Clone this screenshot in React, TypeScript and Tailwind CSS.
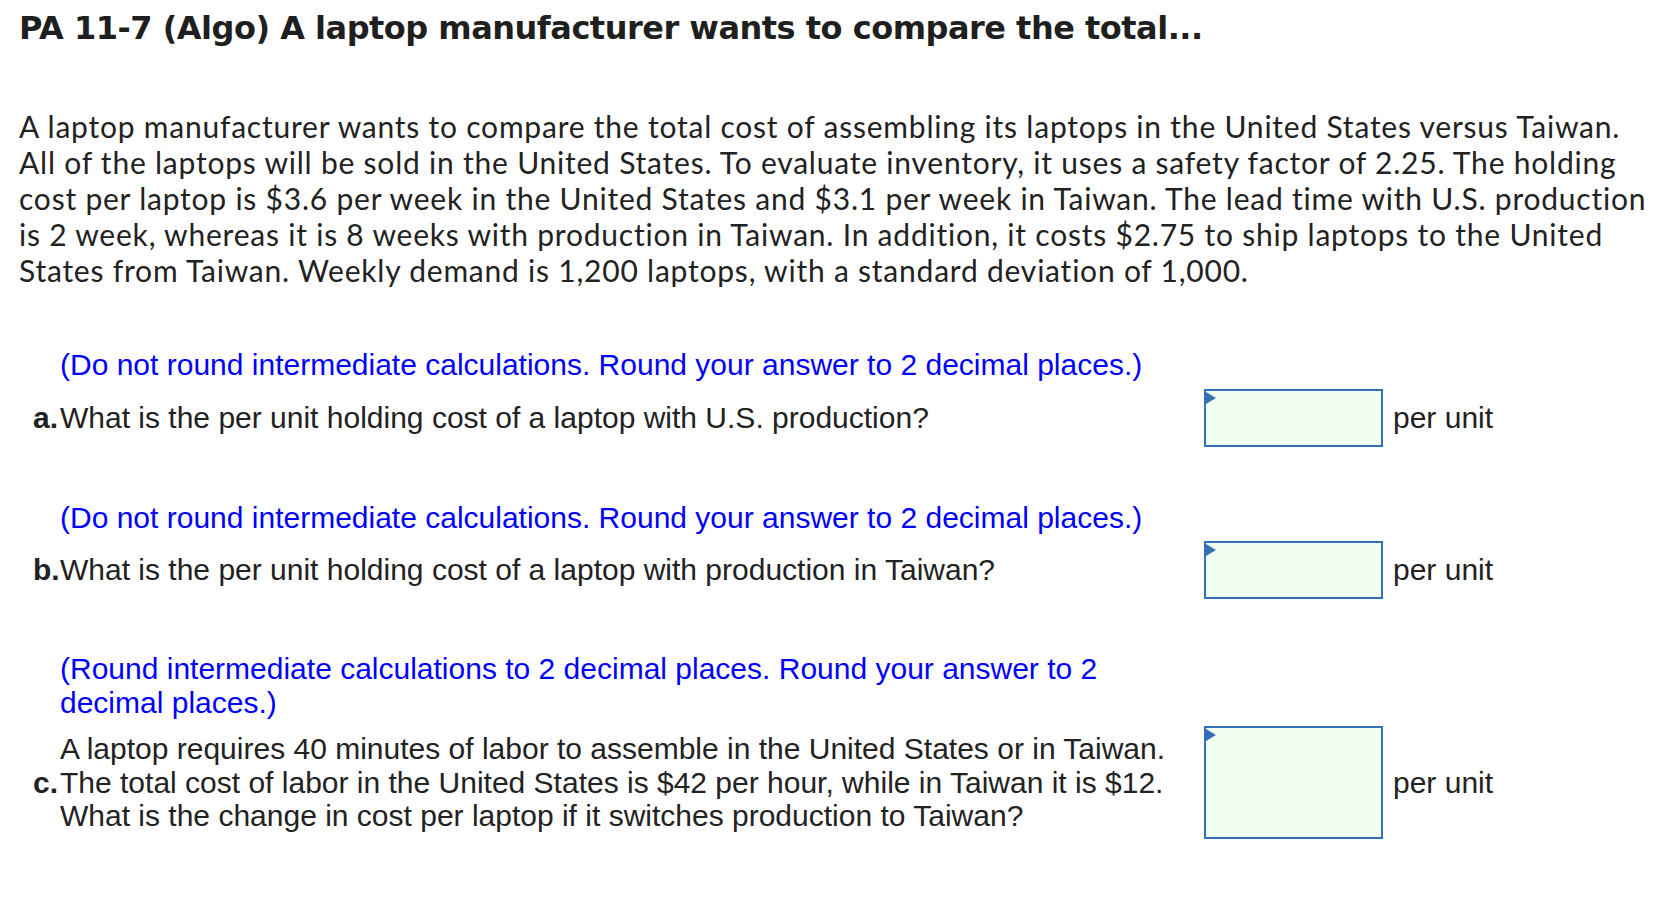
import React from "react";

const para = [
  "A laptop manufacturer wants to compare the total cost of assembling its laptops in the United States versus Taiwan.",
  "All of the laptops will be sold in the United States. To evaluate inventory, it uses a safety factor of 2.25. The holding",
  "cost per laptop is $3.6 per week in the United States and $3.1 per week in Taiwan. The lead time with U.S. production",
  "is 2 week, whereas it is 8 weeks with production in Taiwan. In addition, it costs $2.75 to ship laptops to the United",
  "States from Taiwan. Weekly demand is 1,200 laptops, with a standard deviation of 1,000.",
];

function AnswerBox({ tall }: { tall?: boolean }) {
  return (
    <div
      className={`relative w-[179px] shrink-0 border-2 border-[#3570b5] bg-[#f0fff0] ${
        tall ? "h-[113px]" : "h-[58px]"
      }`}
    >
      <div className="absolute left-0 top-[1px] h-0 w-0 border-y-[6px] border-l-[10px] border-y-transparent border-l-[#3570b5]" />
    </div>
  );
}

function Part({
  label,
  hint,
  children,
  tall,
  className,
}: {
  label: string;
  hint: string;
  children: React.ReactNode;
  tall?: boolean;
  className?: string;
}) {
  return (
    <div className={className}>
      <div className="ml-[60px] w-[1130px] text-[30px] leading-[33.5px] text-[#0000ff]">{hint}</div>
      <div className="mt-[7px] flex items-center pl-[33px]">
        <div className="w-[27px] shrink-0 font-bold text-[#222]">{label}</div>
        <div className="w-[1130px] shrink-0 text-[#222]">{children}</div>
        <div className="ml-[14px]">
          <AnswerBox tall={tall} />
        </div>
        <div className="ml-[10px] text-[#222]">per unit</div>
      </div>
    </div>
  );
}

export default function App() {
  return (
    <div className="min-h-[910px] w-[1660px] bg-white">
      <h1
        className="pl-[19px] pt-[8px] text-[32px] font-bold leading-[41px] tracking-[-0.5px] text-[#1f1f1f]"
        style={{ fontFamily: "'DejaVu Sans', Lato, sans-serif" }}
      >
        PA 11-7 (Algo) A laptop manufacturer wants to compare the total...
      </h1>
      <div
        className="mt-[59px] pl-[19px] text-[30px] leading-[36px] tracking-[0.78px] text-[#222]"
        style={{ fontFamily: "Lato, 'Noto Sans', sans-serif" }}
      >
        {para.map((l, i) => (
          <div key={i} className="whitespace-nowrap">
            {l}
          </div>
        ))}
      </div>
      <div
        className="text-[30px] leading-[33.5px]"
        style={{ fontFamily: "'Liberation Sans', Arial, sans-serif" }}
      >
        <Part
          className="mt-[60px]"
          label="a."
          hint="(Do not round intermediate calculations. Round your answer to 2 decimal places.)"
        >
          What is the per unit holding cost of a laptop with U.S. production?
        </Part>
        <Part
          className="mt-[54px]"
          label="b."
          hint="(Do not round intermediate calculations. Round your answer to 2 decimal places.)"
        >
          What is the per unit holding cost of a laptop with production in Taiwan?
        </Part>
        <Part
          className="mt-[53px]"
          label="c."
          tall
          hint="(Round intermediate calculations to 2 decimal places. Round your answer to 2 decimal places.)"
        >
          A laptop requires 40 minutes of labor to assemble in the United States or in Taiwan. The total cost of labor
          in the United States is $42 per hour, while in Taiwan it is $12. What is the change in cost per laptop if it
          switches production to Taiwan?
        </Part>
      </div>
    </div>
  );
}
